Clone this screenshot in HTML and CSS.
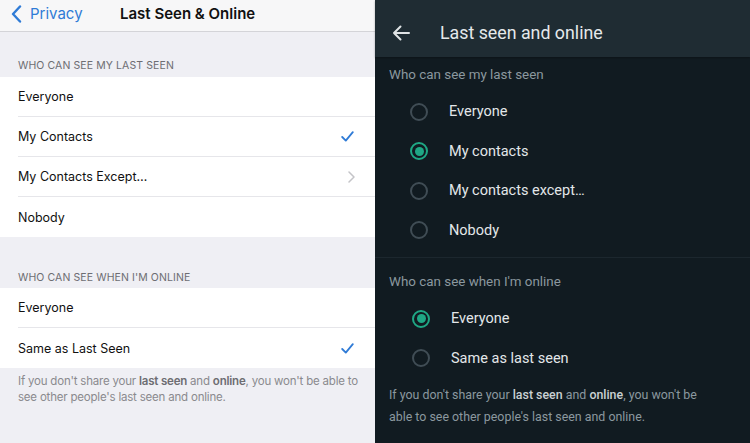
FILE: index.html
```html
<!DOCTYPE html>
<html lang="en">
<head>
    <meta charset="UTF-8">
    <meta name="viewport" content="width=device-width, initial-scale=1.0">
    <title>Last Seen &amp; Online</title>
    <link rel="stylesheet" href="styles.css">
</head>
<body>
    <div class="compare">
        <!-- iOS -->
        <div class="ios">
            <div class="ios-nav">
                <a class="ios-back" href="#">
                    <svg width="11" height="18" viewBox="0 0 11 18"><path d="M9 1.5 L2 9 L9 16.5" fill="none" stroke="#2f7bd6" stroke-width="2.4" stroke-linecap="round" stroke-linejoin="round"/></svg>
                    Privacy
                </a>
                <div class="ios-title">Last Seen &amp; Online</div>
            </div>

            <div class="ios-header first">WHO CAN SEE MY LAST SEEN</div>
            <ul class="ios-list">
                <li>Everyone</li>
                <li>My Contacts <svg class="check" width="13" height="11" viewBox="0 0 13 11"><path d="M1.2 6 L4.8 9.6 L11.8 1.2" fill="none" stroke="#2f7bd6" stroke-width="1.8" stroke-linecap="round" stroke-linejoin="round"/></svg></li>
                <li>My Contacts Except… <span class="chevron">
                    <svg width="7" height="12" viewBox="0 0 7 12"><path d="M1 1 L6 6 L1 11" fill="none" stroke="#c4c4c8" stroke-width="1.5" stroke-linecap="round" stroke-linejoin="round"/></svg>
                </span></li>
                <li>Nobody</li>
            </ul>

            <div class="ios-header">WHO CAN SEE WHEN I'M ONLINE</div>
            <ul class="ios-list">
                <li>Everyone</li>
                <li>Same as Last Seen <svg class="check" width="13" height="11" viewBox="0 0 13 11"><path d="M1.2 6 L4.8 9.6 L11.8 1.2" fill="none" stroke="#2f7bd6" stroke-width="1.8" stroke-linecap="round" stroke-linejoin="round"/></svg></li>
            </ul>
            <p class="ios-footer">If you don't share your <b>last seen</b> and <b>online</b>, you won't be able to see other people's last seen and online.</p>
        </div>

        <!-- Android -->
        <div class="android">
            <div class="and-bar">
                <svg class="and-back" width="18" height="16" viewBox="0 0 18 16"><path d="M17 8 H2 M8.5 1.5 L2 8 L8.5 14.5" fill="none" stroke="#dfe3e5" stroke-width="2" stroke-linecap="round" stroke-linejoin="round"/></svg>
                <div class="and-title">Last seen and online</div>
            </div>

            <div class="and-section">
                <div class="and-header">Who can see my last seen</div>
                <label class="and-option"><span class="radio"></span>Everyone</label>
                <label class="and-option"><span class="radio on"></span>My contacts</label>
                <label class="and-option"><span class="radio"></span>My contacts except…</label>
                <label class="and-option"><span class="radio"></span>Nobody</label>
            </div>

            <div class="and-section second">
                <div class="and-header">Who can see when I'm online</div>
                <label class="and-option shift"><span class="radio on"></span>Everyone</label>
                <label class="and-option shift"><span class="radio"></span>Same as last seen</label>
                <p class="and-footer">If you don't share your <b>last seen</b> and <b>online</b>, you won't be able to see other people's last seen and online.</p>
            </div>
        </div>
    </div>
</body>
</html>
```

FILE: styles.css
```css
* {
    box-sizing: border-box;
}
body {
    margin: 0;
    width: 750px;
    height: 443px;
    overflow: hidden;
}
.compare {
    display: flex;
    height: 443px;
}

/* iOS side */
.ios {
    width: 375px;
    background-color: #efeff4;
    font-family: Inter, "Liberation Sans", sans-serif;
    color: #111;
}
.ios-nav {
    height: 32px;
    background-color: #f7f7f8;
    border-bottom: 1px solid #d4d4d8;
    display: flex;
    align-items: center;
    padding: 0 0 4px 11px;
}
.ios-back {
    display: flex;
    align-items: center;
    gap: 8px;
    color: #2f7bd6;
    text-decoration: none;
    font-size: 15px;
    width: 109px;
}
.ios-title {
    font-size: 15px;
    font-weight: 600;
}
.ios-header {
    font-size: 10.5px;
    color: #6d6d72;
    padding: 34px 18px 4px;
    letter-spacing: 0.1px;
}
.ios-header.first {
    padding-top: 27px;
    padding-bottom: 5px;
}
.ios-list {
    list-style: none;
    margin: 0;
    padding: 0 0 0 18px;
    background: #fff;
}
.ios-list li {
    height: 40px;
    display: flex;
    align-items: center;
    justify-content: space-between;
    font-size: 12.5px;
    padding-right: 20px;
    border-bottom: 1px solid #e6e6ea;
}
.ios-list li:last-child {
    border-bottom: none;
}
.check {
    margin-right: 1px;
}
.chevron {
    display: flex;
    margin-right: 0;
}
.ios-footer {
    margin: 5px 0 0;
    padding: 0 8px 0 18px;
    font-size: 11.5px;
    letter-spacing: -0.2px;
    line-height: 16px;
    color: #8a8a8e;
}
.ios-footer b {
    color: #6d6d72;
    font-weight: 600;
}

/* Android side */
.android {
    width: 375px;
    background-color: #111b21;
    font-family: Roboto, "Liberation Sans", sans-serif;
    color: #e3e7e9;
}
.and-bar {
    height: 57px;
    background-color: #1f2c33;
    display: flex;
    align-items: center;
    padding: 8px 0 0 17px;
    box-shadow: 0 1px 2px rgba(0, 0, 0, 0.3);
}
.and-back {
    margin-right: 30px;
}
.and-title {
    font-size: 17.8px;
    color: #e5e9eb;
}
.and-section {
    padding: 10px 0 0 14px;
}
.and-section.second {
    border-top: 1px solid #1c272e;
    margin-top: 7px;
    padding-top: 16px;
}
.and-header {
    font-size: 13.4px;
    color: #8b989f;
    margin-bottom: 10px;
}
.and-option {
    height: 39.5px;
    display: flex;
    align-items: center;
    padding-left: 21px;
    font-size: 14.5px;
}
.and-option.shift {
    padding-left: 23px;
}
.radio {
    width: 18px;
    height: 18px;
    border: 2px solid #404d55;
    border-radius: 50%;
    margin-right: 21px;
    display: flex;
    align-items: center;
    justify-content: center;
}
.radio.on {
    border-color: #1fa885;
}
.radio.on::after {
    content: "";
    width: 9px;
    height: 9px;
    border-radius: 50%;
    background-color: #1fa885;
}
.and-footer {
    margin: 6px 0 0;
    padding-right: 32px;
    font-size: 12.4px;
    line-height: 22px;
    color: #8b989f;
}
.and-footer b {
    color: #c9d0d3;
    font-weight: 500;
}
```
